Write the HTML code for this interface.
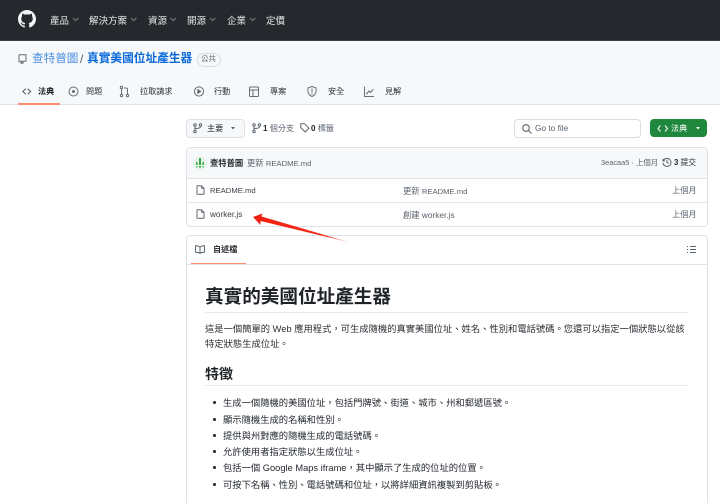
<!DOCTYPE html>
<html lang="zh-Hant"><head><meta charset="utf-8"><title>真實美國位址產生器</title>
<style>
html,body{margin:0;padding:0;background:#fff;width:720px;height:503px;overflow:hidden}
#w{position:relative;width:720px;height:503px;overflow:hidden;filter:blur(.3px);font-family:"Liberation Sans","Noto Sans CJK SC",sans-serif;color:#1f2328}
.a{position:absolute;white-space:nowrap;line-height:14px}
.b{position:absolute}
svg{position:absolute;overflow:visible}
.n{color:#e6e8ea;font-size:9.5px;top:14.500px}
.t{font-size:8.1px;color:#2d333a;top:85px}
.m{color:#59636e}
.li{font-size:9.3px;left:223px;color:#24292f}
.dot{position:absolute;left:213px;width:3.4px;height:3.4px;border-radius:50%;background:#1f2328}
.s{fill:none;stroke:#656d76;stroke-width:1;stroke-linecap:round;stroke-linejoin:round}
.l{font-size:7.650px}
</style></head><body><div id="w">
<div class="b" style="left:0;top:0;width:720px;height:40px;background:#25292e;border-bottom:1px solid #3b3f44"></div>
<svg style="left:18px;top:10px" width="18" height="18" viewBox="0 0 16 16"><path fill="#f4f5f6" d="M8 0C3.58 0 0 3.58 0 8c0 3.54 2.29 6.53 5.47 7.59.4.07.55-.17.55-.38 0-.19-.01-.82-.01-1.49-2.01.37-2.53-.49-2.69-.94-.09-.23-.48-.94-.82-1.13-.28-.15-.68-.52-.01-.53.63-.01 1.08.58 1.23.82.72 1.21 1.87.87 2.33.66.07-.52.28-.87.51-1.07-1.78-.2-3.64-.89-3.64-3.95 0-.87.31-1.59.82-2.15-.08-.2-.36-1.02.08-2.12 0 0 .67-.21 2.2.82.64-.18 1.32-.27 2-.27s1.36.09 2 .27c1.53-1.04 2.2-.82 2.2-.82.44 1.1.16 1.92.08 2.12.51.56.82 1.27.82 2.15 0 3.07-1.87 3.75-3.65 3.95.29.25.54.73.54 1.48 0 1.07-.01 1.93-.01 2.2 0 .21.15.46.55.38A8.01 8.01 0 0 0 16 8c0-4.42-3.58-8-8-8z"/></svg>
<div class="a n" style="left:50px">產品</div>
<div class="a n" style="left:89px">解決方案</div>
<div class="a n" style="left:148px">資源</div>
<div class="a n" style="left:187px">開源</div>
<div class="a n" style="left:227px">企業</div>
<div class="a n" style="left:266px">定價</div>
<svg style="left:0;top:0" width="300" height="40"><g fill="none" stroke="#7d8185" stroke-width="1"><path d="M73 18l2.7 2.7 2.7-2.7M131 18l2.7 2.7 2.7-2.7M170.500 18l2.700 2.700 2.700-2.700M210 18l2.700 2.700 2.700-2.700M250 18l2.700 2.700 2.700-2.700"/></g></svg>

<div class="b" style="left:0;top:41px;width:720px;height:63px;background:#f6f8fa;border-bottom:1px solid #dfe3e8"></div>
<svg style="left:18px;top:54px" width="9" height="10" viewBox="0 0 9 10"><path class="s" d="M1 8V1.500Q1 .700 1.800 .700H8V7.200H2M3 7.200V9.500L4 8.800 5 9.500V7.200"/></svg>
<div class="a" style="left:32px;top:52px;font-size:11.6px;color:#4a90e0">查特普圖</div>
<div class="a" style="left:80px;top:52px;font-size:12px;color:#59636e">/</div>
<div class="a" style="left:87px;top:52px;font-size:11.7px;font-weight:700;color:#0969da">真實美國位址產生器</div>
<div class="b" style="left:197px;top:53px;width:22px;height:12px;border:1px solid #d8dee4;border-radius:7px"></div>
<div class="a m" style="left:201px;top:52px;font-size:7.500px">公共</div>

<svg style="left:0;top:84px" width="400" height="16" fill="none" stroke="#656d76" stroke-linecap="round" stroke-linejoin="round">
<path d="M25.500 5L22.800 7.500 25.500 10M28 5L30.700 7.500 28 10" stroke="#50565e"/>
<circle cx="73.500" cy="7.500" r="4.500"/><circle cx="73.500" cy="7.500" r="1" fill="#656d76"/>
<circle cx="121.500" cy="3.500" r="1.200"/><circle cx="121.500" cy="11.500" r="1.200"/><circle cx="127.500" cy="11.500" r="1.200"/><path d="M121.500 5v5M127.500 10V5.500Q127.500 4 126 4H124.500"/>
<circle cx="199" cy="7.500" r="4.600"/><path d="M197.800 5.500v4l3-2z" fill="#656d76"/>
<rect x="249.500" y="3" width="9" height="9.500" rx="1"/><path d="M249.500 6h9M253 6v6.500"/>
<path d="M312 2.500l4 1.300v3.700q0 3.200-4 5-4-1.800-4-5V3.800zM312 5v3M312 9.700v.5"/>
<path d="M364.500 3v9.500H373.500M366.500 10l2.500-3 1.500 1.500 2.500-3"/>
</svg>
<div class="a t" style="left:38px;font-weight:700;color:#1f2328">法典</div>
<div class="a t" style="left:86px">問題</div>
<div class="a t" style="left:140px">拉取請求</div>
<div class="a t" style="left:214px">行動</div>
<div class="a t" style="left:270px">專案</div>
<div class="a t" style="left:328px">安全</div>
<div class="a t" style="left:385px">見解</div>
<div class="b" style="left:18px;top:103px;width:42px;height:2px;background:#fd8c73"></div>

<!-- toolbar -->
<div class="b" style="left:186px;top:119px;width:57px;height:17px;background:#f6f8fa;border:1px solid #dde1e6;border-radius:4px"></div>
<svg style="left:193px;top:123px" width="10" height="10" fill="none" stroke="#59636e"><circle cx="2" cy="2" r="1.200"/><circle cx="2" cy="8.500" r="1.200"/><circle cx="7.500" cy="2" r="1.200"/><path d="M2 3.500v3.500M7.500 3.500Q7.500 5.500 2.500 5.500"/></svg>
<div class="a" style="left:207px;top:122px;font-size:8.100px;color:#24292f">主要</div>
<svg style="left:230px;top:127px" width="6" height="4"><path d="M1 0h4L3 2.500z" fill="#59636e"/></svg>
<svg style="left:252px;top:123px" width="10" height="10" fill="none" stroke="#59636e"><circle cx="2" cy="2" r="1.200"/><circle cx="2" cy="8.500" r="1.200"/><circle cx="7.500" cy="2" r="1.200"/><path d="M2 3.500v3.500M7.500 3.500Q7.500 5.500 2.500 5.500"/></svg>
<div class="a m" style="left:263px;top:122px;font-size:8.100px"><b style="color:#24292f">1</b> 個分支</div>
<svg style="left:300px;top:123px" width="10" height="10" fill="none" stroke="#59636e"><path d="M.700 1Q.700 .700 1 .700H4.500L9 5.200 5.200 9 .700 4.500z"/></svg>
<div class="a m" style="left:311px;top:122px;font-size:8.100px"><b style="color:#24292f">0</b> 標籤</div>

<div class="b" style="left:514px;top:119px;width:125px;height:17px;background:#fff;border:1px solid #d8dee4;border-radius:4px"></div>
<svg style="left:522px;top:124px" width="10" height="10" fill="none" stroke="#59636e" stroke-width="1.100"><circle cx="4" cy="4" r="3.300"/><path d="M6.500 6.500L9.500 9.500"/></svg>
<div class="a m" style="left:535px;top:121px;font-size:8.300px">Go to file</div>
<div class="b" style="left:650px;top:119px;width:57px;height:18px;background:#1f883d;border-radius:4px"></div>
<svg style="left:657px;top:124px" width="12" height="9" fill="none" stroke="#fff"><path d="M3.500 1.500L1 4.500 3.500 7.500M8 1.500l2.500 3L8 7.500"/></svg>
<div class="a" style="left:671px;top:122px;font-size:8.100px;color:#fff;font-weight:400">法典</div>
<svg style="left:695px;top:127px" width="6" height="4"><path d="M1 0h4L3 2.500z" fill="#fff"/></svg>

<!-- file table -->
<div class="b" style="left:186px;top:147px;width:520px;height:78px;border:1px solid #dfe3e8;border-radius:4px;overflow:hidden">
<div class="b" style="left:0;top:0;width:520px;height:30px;background:#f6f8fa;border-bottom:1px solid #dfe3e8"></div>
<div class="b" style="left:0;top:54px;width:520px;height:1px;background:#e4e8ec"></div>
</div>
<svg style="left:193px;top:156px" width="14" height="14"><circle cx="7" cy="7" r="6.500" fill="#e6f4e8"/><g fill="#35a84a"><rect x="6" y="2" width="2" height="7"/><rect x="3" y="6" width="1.500" height="3"/><rect x="9.500" y="6" width="1.500" height="3"/><rect x="6" y="10" width="2" height="1.500"/><rect x="3" y="10.500" width="1.500" height="1"/><rect x="9.500" y="10.500" width="1.500" height="1"/></g></svg>
<div class="a" style="left:210px;top:156px;font-size:8.300px;font-weight:700;color:#24292f">查特普圖</div>
<div class="a m" style="left:247px;top:156px;font-size:8.300px">更新 <span class="l">README.md</span></div>
<div class="a m" style="left:601px;top:156px;font-size:7.400px">3eacaa5 · 上個月</div>
<svg style="left:662px;top:157px" width="10" height="10" fill="none" stroke="#59636e"><path d="M1 2v2h2M1.200 4A4 4 0 1 1 1 6M5 2.800V5.300L6.800 6.300"/></svg>
<div class="a" style="left:674px;top:156px;font-size:7.800px;color:#24292f"><b>3</b> 提交</div>

<svg style="left:196px;top:185px" width="9" height="10"><path class="s" d="M1 .7H5.500L8 3.200V9.300H1zM5.500 .7V3.200H8"/></svg>
<svg style="left:196px;top:209px" width="9" height="10"><path class="s" d="M1 .7H5.500L8 3.200V9.300H1zM5.500 .7V3.200H8"/></svg>
<div class="a" style="left:210px;top:184px;font-size:7.700px;color:#3a4048">README.md</div>
<div class="a" style="left:210px;top:208px;font-size:8.200px;color:#3a4048">worker.js</div>
<div class="a m" style="left:403px;top:184px;font-size:8.300px">更新 <span class="l">README.md</span></div>
<div class="a m" style="left:403px;top:208px;font-size:8.300px">創建 worker.js</div>
<div class="a m" style="left:672px;top:184px;font-size:8.200px">上個月</div>
<div class="a m" style="left:672px;top:208px;font-size:8.200px">上個月</div>

<!-- readme -->
<div class="b" style="left:185.500px;top:235px;width:520px;height:290px;border:1px solid #dfe3e8;border-radius:4px"></div>
<div class="b" style="left:186px;top:263.500px;width:521px;height:1px;background:#dfe3e8"></div>
<div class="b" style="left:191px;top:262.500px;width:55px;height:1.500px;background:#fd8c73"></div>
<svg style="left:195px;top:245px" width="10" height="9" fill="none" stroke="#59636e"><path d="M5 2Q3.500 .8 .6 .8V7.300Q3.500 7.300 5 8.300 6.500 7.300 9.400 7.300V.8Q6.500 .8 5 2zM5 2V8.300"/></svg>
<div class="a" style="left:213px;top:243px;font-size:8.100px;font-weight:700;color:#24292f">自述檔</div>
<svg style="left:687px;top:245px" width="9" height="9" stroke="#59636e"><path d="M0 1.500h1M3 1.500h6M0 4.500h1M3 4.500h6M0 7.500h1M3 7.500h6"/></svg>

<div class="a" style="left:205px;top:285px;font-size:18.600px;line-height:24px;font-weight:700;color:#1f2328">真實的美國位址產生器</div>
<div class="b" style="left:205px;top:312px;width:483px;height:1px;background:#e6e9ed"></div>
<div class="a" style="left:205px;top:322px;font-size:9.300px;color:#2a2f35">這是一個簡單的 Web 應用程式，可生成隨機的真實美國位址、姓名、性別和電話號碼。您還可以指定一個狀態以從該</div>
<div class="a" style="left:205px;top:337px;font-size:9.300px;color:#2a2f35">特定狀態生成位址。</div>
<div class="a" style="left:205px;top:365px;font-size:14px;line-height:18px;font-weight:700;color:#1f2328">特徵</div>
<div class="b" style="left:205px;top:385px;width:483px;height:1px;background:#e6e9ed"></div>
<div class="dot" style="top:401px"></div><div class="a li" style="top:396px">生成一個隨機的美國位址，包括門牌號、街道、城市、州和郵遞區號。</div>
<div class="dot" style="top:417.500px"></div><div class="a li" style="top:413px">顯示隨機生成的名稱和性別。</div>
<div class="dot" style="top:433.500px"></div><div class="a li" style="top:429px">提供與州對應的隨機生成的電話號碼。</div>
<div class="dot" style="top:450px"></div><div class="a li" style="top:445px">允許使用者指定狀態以生成位址。</div>
<div class="dot" style="top:466px"></div><div class="a li" style="top:461px">包括一個 Google Maps iframe，其中顯示了生成的位址的位置。</div>
<div class="dot" style="top:482.500px"></div><div class="a li" style="top:478px">可按下名稱、性別、電話號碼和位址，以將詳細資訊複製到剪貼板。</div>

<!-- arrow -->
<svg style="left:0;top:0" width="720" height="503"><defs><linearGradient id="g" gradientUnits="userSpaceOnUse" x1="255" y1="217" x2="352" y2="243"><stop offset="0" stop-color="#f02010"/><stop offset=".7" stop-color="#f52a1c"/><stop offset="1" stop-color="#f52a1c" stop-opacity=".1"/></linearGradient></defs><path d="M253 217L262.500 213.500 261.500 216.500 352 243 260.500 221 260.500 225z" fill="url(#g)"/></svg>
</div></body></html>
